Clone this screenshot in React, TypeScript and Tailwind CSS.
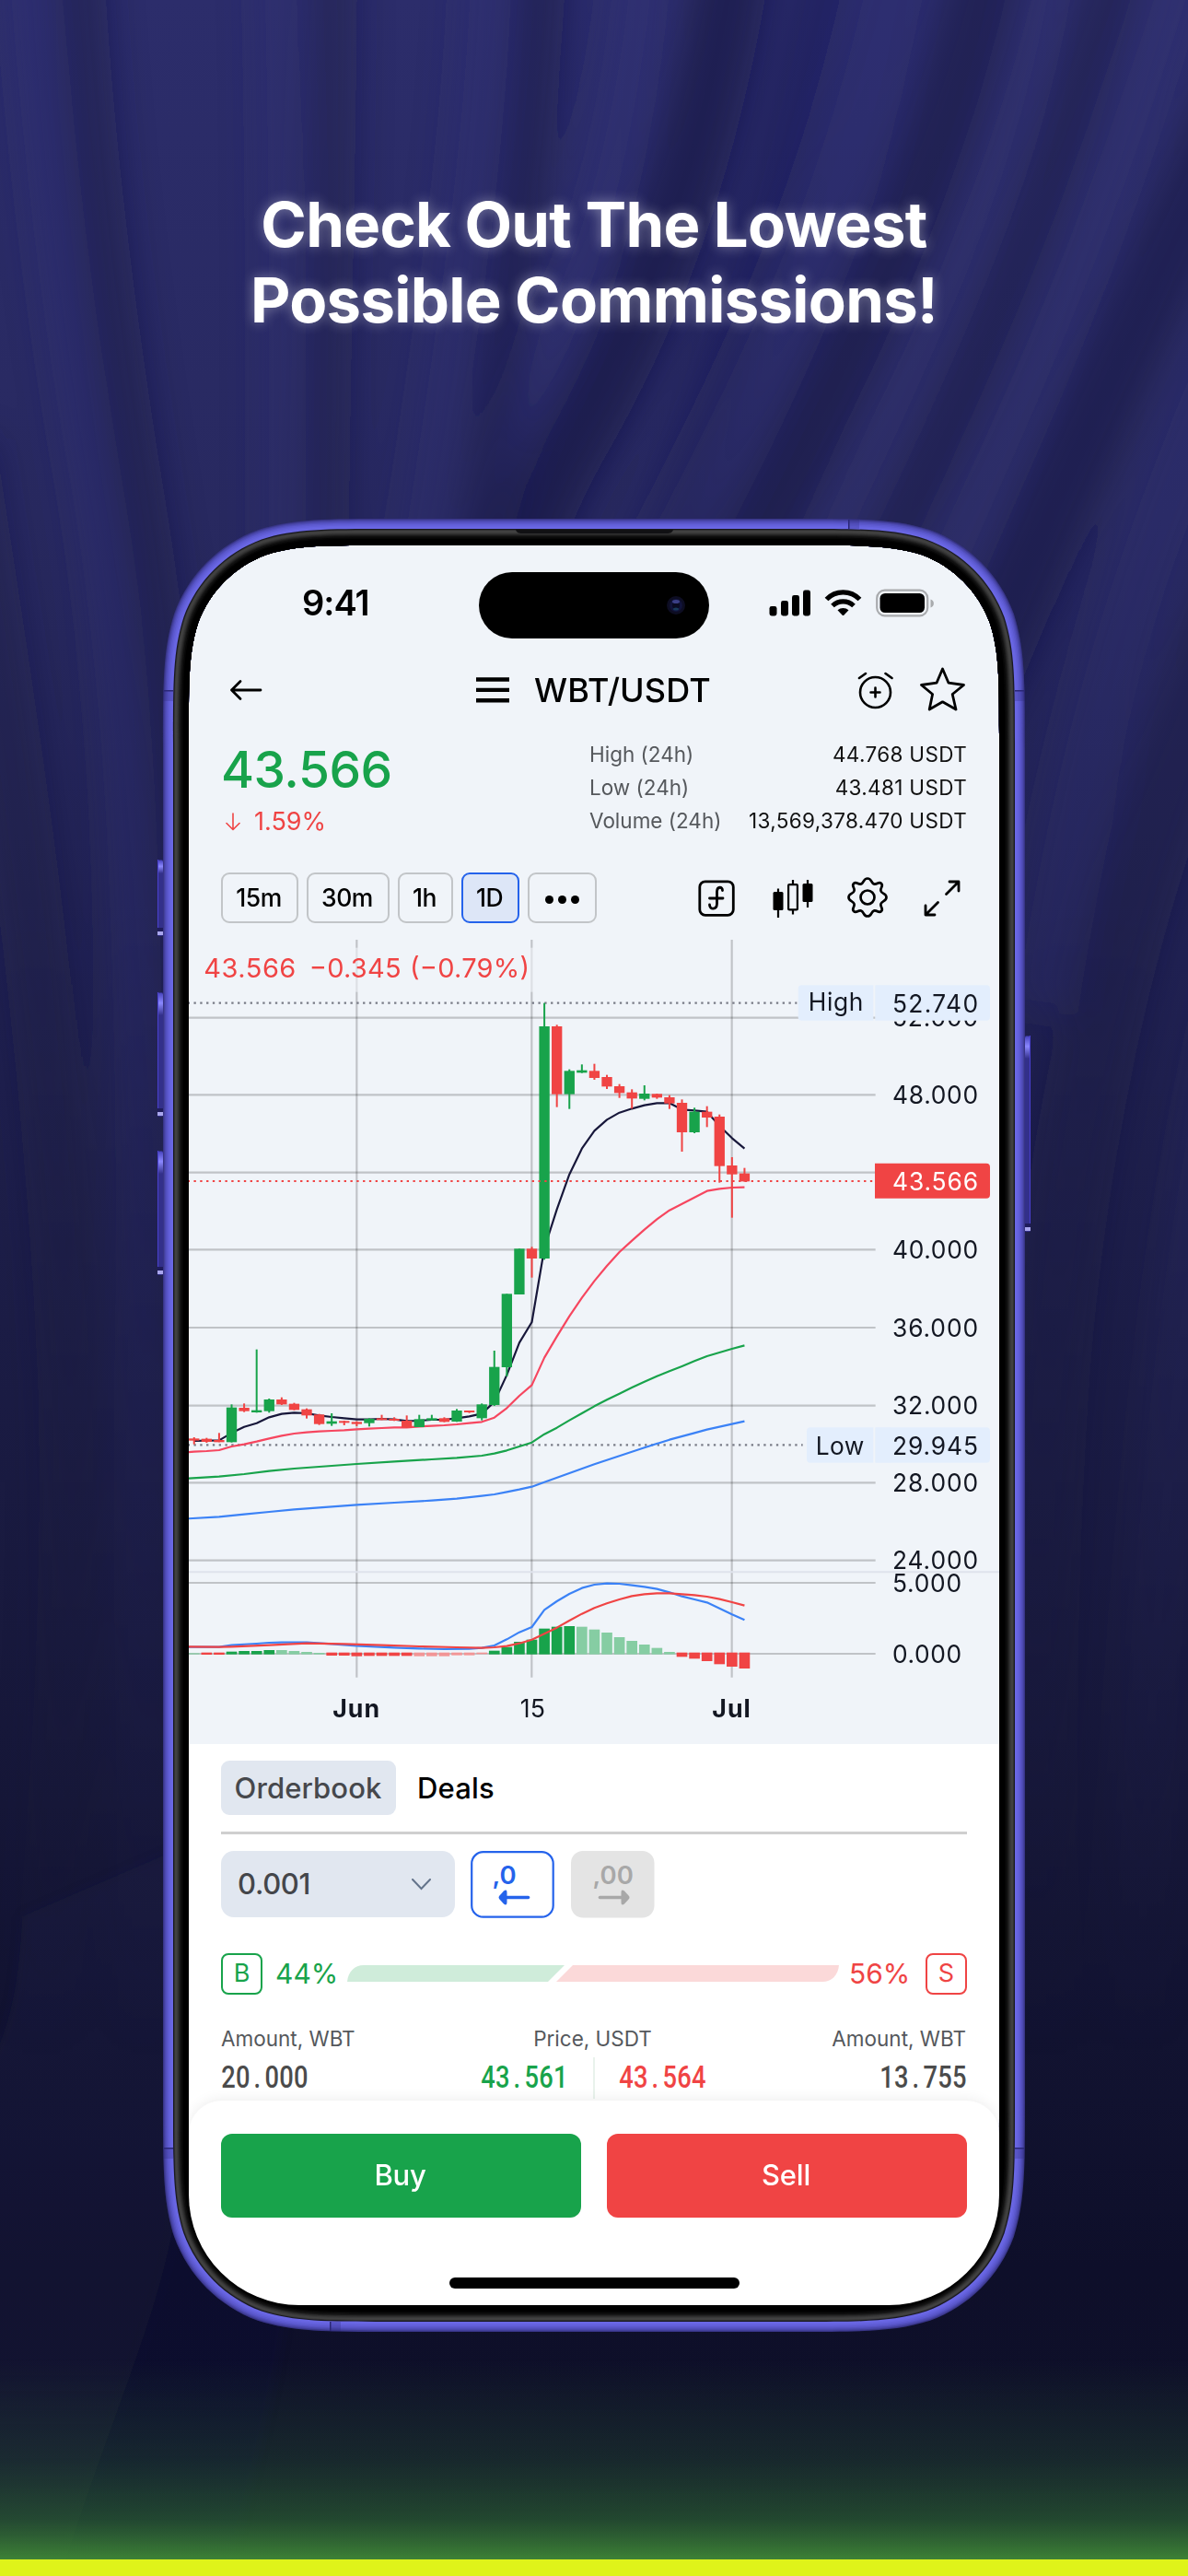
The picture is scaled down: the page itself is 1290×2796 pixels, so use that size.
import type { ReactNode } from "react";

const CORNER = [1.52866, 1.08849, 0.86841, 0.63149, 0.07491, 0.37282, 0.16906];

// Rounded rectangle with continuous (squircle) corners.
function squircle(x: number, y: number, w: number, h: number, r: number) {
  const [a, b, c, d, e, f, g] = CORNER.map((k) => k * r);
  const R = x + w;
  const B = y + h;
  return [
    `M${x + a} ${y}H${R - a}`,
    `C${R - b} ${y} ${R - c} ${y} ${R - d} ${y + e}`,
    `C${R - f} ${y + g} ${R - g} ${y + f} ${R - e} ${y + d}`,
    `C${R} ${y + c} ${R} ${y + b} ${R} ${y + a}`,
    `V${B - a}`,
    `C${R} ${B - b} ${R} ${B - c} ${R - e} ${B - d}`,
    `C${R - g} ${B - f} ${R - f} ${B - g} ${R - d} ${B - e}`,
    `C${R - c} ${B} ${R - b} ${B} ${R - a} ${B}`,
    `H${x + a}`,
    `C${x + b} ${B} ${x + c} ${B} ${x + d} ${B - e}`,
    `C${x + f} ${B - g} ${x + g} ${B - f} ${x + e} ${B - d}`,
    `C${x} ${B - c} ${x} ${B - b} ${x} ${B - a}`,
    `V${y + a}`,
    `C${x} ${y + b} ${x} ${y + c} ${x + e} ${y + d}`,
    `C${x + g} ${y + f} ${x + f} ${y + g} ${x + d} ${y + e}`,
    `C${x + c} ${y} ${x + b} ${y} ${x + a} ${y}Z`,
  ].join("");
}

// Inset from the outer edge of the case and the colour from there inwards.
const rings: [number, string][] = [
  [0, "#383587"],
  [1, "#43409c"],
  [2, "#4c49b0"],
  [3.2, "#5451c0"],
  [4.5, "#5c59ce"],
  [6, "#625fd8"],
  [7.5, "#6764e0"],
  [9, "#6a67e4"],
  [11, "#191920"],
  [12.2, "#3a3a3a"],
  [13, "#414141"],
  [15, "#3a3a3a"],
  [16, "#303030"],
  [17, "#252525"],
  [18, "#191919"],
  [19, "#0f0f0f"],
  [20.5, "#060606"],
  [22, "#000000"],
];

// Dark creases of the cloth, each with a lit ridge beside it.
const folds = [
  { d: "M84 -60C92 120 116 330 154 560C186 760 206 980 210 1500V2600", w: 56, o: 0.4 },
  { d: "M-40 480C10 800 60 1120 76 1500C84 1800 60 2080 10 2600", w: 70, o: 0.32 },
  { d: "M362 -60C362 200 352 420 352 760", w: 52, o: 0.34 },
  { d: "M590 -60C580 160 556 330 490 760", w: 52, o: 0.46 },
  { d: "M800 -60C760 200 690 360 620 480C570 570 550 640 530 760", w: 80, o: 0.55 },
  { d: "M900 -60C840 260 760 500 640 800", w: 60, o: 0.22 },
  { d: "M1080 -60C1020 220 900 440 700 800", w: 84, o: 0.48 },
  { d: "M1220 -60C1140 240 1040 460 860 800", w: 64, o: 0.4 },
  { d: "M1400 -20C1250 330 1150 520 1040 800", w: 84, o: 0.5 },
  { d: "M1400 500C1290 800 1210 960 1160 1300C1130 1500 1120 1700 1120 2600", w: 90, o: 0.36 },
];

const glints = [
  { d: "M30 -60C46 160 66 340 98 520C132 720 146 940 150 1400V2600", w: 44, o: 0.34 },
  { d: "M300 -60C308 200 305 420 306 760", w: 54, o: 0.22 },
  { d: "M530 -60C524 140 500 320 430 760", w: 60, o: 0.24 },
  { d: "M700 -60C680 180 620 340 560 460L470 760", w: 60, o: 0.32 },
  { d: "M980 -60C930 200 840 420 620 800", w: 84, o: 0.26 },
  { d: "M1140 -60C1090 220 980 420 800 800", w: 56, o: 0.28 },
  { d: "M1290 -60C1200 260 1090 460 950 800", w: 64, o: 0.3 },
  { d: "M1400 240C1280 500 1190 700 1130 1100", w: 80, o: 0.24 },
  { d: "M1400 900C1310 1200 1240 1500 1230 2600", w: 80, o: 0.22 },
];

function Backdrop() {
  return (
    <svg className="absolute inset-0" width="1290" height="2796" viewBox="0 0 1290 2796">
      <defs>
        <linearGradient id="night" x1="0" y1="0" x2="0" y2="1">
          <stop offset="0" stopColor="#2c2d6b" />
          <stop offset="0.2" stopColor="#282960" />
          <stop offset="0.42" stopColor="#1f204d" />
          <stop offset="0.7" stopColor="#161738" />
          <stop offset="0.88" stopColor="#0e0f2a" />
          <stop offset="1" stopColor="#0f1028" />
        </linearGradient>
        <linearGradient id="glow" x1="0" y1="0" x2="0" y2="1">
          <stop offset="0" stopColor="#2c5c35" stopOpacity="0" />
          <stop offset="0.5" stopColor="#2c5c35" stopOpacity="0.32" />
          <stop offset="0.8" stopColor="#2f6a34" stopOpacity="0.62" />
          <stop offset="1" stopColor="#408837" stopOpacity="0.95" />
        </linearGradient>
        <linearGradient id="fadeRamp" x1="0" y1="0" x2="0" y2="1">
          <stop offset="0" stopColor="#fff" />
          <stop offset="0.35" stopColor="#fff" />
          <stop offset="0.8" stopColor="#000" />
        </linearGradient>
        <mask id="fade" maskUnits="userSpaceOnUse" x="0" y="0" width="1290" height="2796">
          <rect width="1290" height="2796" fill="url(#fadeRamp)" />
        </mask>
        <filter id="soft" filterUnits="userSpaceOnUse" x="-100" y="-100" width="1490" height="2996">
          <feGaussianBlur stdDeviation="19" />
        </filter>
        <filter id="hazy" filterUnits="userSpaceOnUse" x="-100" y="1900" width="700" height="1000">
          <feGaussianBlur stdDeviation="6" />
        </filter>
      </defs>
      <rect width="1290" height="2796" fill="url(#night)" />
      <g mask="url(#fade)">
        <g fill="none" filter="url(#soft)">
          {glints.map((s) => (
            <path key={s.d} d={s.d} stroke="#36377f" strokeWidth={s.w} opacity={s.o} />
          ))}
          {folds.map((s) => (
            <path key={s.d} d={s.d} stroke="#17173f" strokeWidth={s.w} opacity={s.o} />
          ))}
        </g>
      </g>
      <g fill="#2a2b66" filter="url(#hazy)">
        <path d="M24 2080L210 2000L189 2413C170 2520 123 2618 66 2796H-40V2276C0 2240 20 2180 24 2080Z" opacity="0.13" />
        <path d="M189 2413C170 2520 123 2618 66 2796H247C280 2675 310 2560 325 2400Z" opacity="0.08" />
      </g>
      <rect y="2560" width="1290" height="218" fill="url(#glow)" />
      <rect y="2778" width="1290" height="18" fill="#dff31a" />
    </svg>
  );
}

function SideKey({ x, y, h, flip }: { x: number; y: number; h: number; flip?: boolean }) {
  return (
    <g>
      <rect x={x} y={y} width="6" height={h} rx="1.5" fill="#33308a" />
      <rect x={x} y={y + 1} width="6" height={h > 100 ? 24 : 14} rx="1.5" fill="url(#keyShine)" />
      <rect x={flip ? x + 5 : x} y={y} width="1" height={h - 5} fill="#4a40d0" />
      <rect x={x} y={y + h - 9} width="6" height="4" fill="#1f1c5c" />
      <rect x={x} y={y + h - 5} width="6" height="4" fill="#a9a6ee" />
    </g>
  );
}

function PhoneFrame() {
  const hole = squircle(28, 29, 880, 1910, 134);
  return (
    <svg className="pointer-events-none absolute -left-[28px] -top-[29px] overflow-visible" width="936" height="1968" viewBox="0 0 936 1968">
      <defs>
        <linearGradient id="keyShine" x1="0" y1="0" x2="0" y2="1">
          <stop offset="0" stopColor="#4a46c0" />
          <stop offset="0.45" stopColor="#8b88ff" />
          <stop offset="1" stopColor="#33308a" />
        </linearGradient>
      </defs>
      <SideKey x={-6} y={370} h={83} />
      <SideKey x={-6} y={514} h={135} />
      <SideKey x={-6} y={686} h={135} />
      <SideKey x={936} y={561} h={213} flip />
      {rings.map(([inset, color]) => (
        <path
          key={inset}
          fillRule="evenodd"
          fill={color}
          d={squircle(inset, inset, 936 - inset * 2, 1968 - inset * 2, 163 - inset) + hole}
        />
      ))}
      <path d="M383 12H554C553 15 551 16 547 16H390C386 16 384 15 383 12Z" fill="#111114" />
      <g fill="#2a2776">
        <rect x="1" y="186" width="10" height="1.5" />
        <rect x="925" y="186" width="10" height="1.5" />
        <rect x="1" y="1768" width="10" height="1.5" />
        <rect x="925" y="1768" width="10" height="1.5" />
        <rect x="744" y="1" width="1.5" height="10" />
        <rect x="181" y="1957" width="1.5" height="10" />
      </g>
      <g fill="#2a2776" opacity="0.25">
        <rect x="0" y="187" width="11" height="11" />
        <rect x="925" y="187" width="11" height="11" />
        <rect x="0" y="1769" width="11" height="11" />
        <rect x="925" y="1769" width="11" height="11" />
        <rect x="745" y="0" width="11" height="11" />
        <rect x="182" y="1957" width="11" height="11" />
      </g>
    </svg>
  );
}

function StatusBar() {
  return (
    <div className="mt-[29px] flex h-[72px] items-center">
      <div className="w-[315px] pb-[6px] pl-[123px] text-[38px] leading-none font-semibold tracking-[-1px]">9:41</div>
      <div className="flex h-[72px] w-[250px] items-center justify-end rounded-full bg-black pr-[25px]">
        <svg width="22" height="22" viewBox="0 0 22 22">
          <circle cx="11" cy="11" r="10" fill="#0d0d22" />
          <circle cx="11" cy="11" r="7" fill="#11133a" />
          <circle cx="11" cy="11" r="4" fill="#0a0b22" />
          <ellipse cx="11" cy="7" rx="4" ry="2" fill="#3b3f86" />
          <ellipse cx="11" cy="15" rx="3" ry="1.6" fill="#173a5a" />
        </svg>
      </div>
      <svg className="mb-[6px] ml-[65px]" width="182" height="32" viewBox="0 0 182 32">
        <rect x="0.5" y="20" width="8" height="10.500" rx="2.4" />
        <rect x="13" y="14" width="8" height="16.500" rx="2.4" />
        <rect x="25" y="8" width="8" height="22.500" rx="2.4" />
        <rect x="37" y="2.500" width="8" height="28" rx="2.4" />
        <g fill="none" stroke="#000" strokeWidth="5.200">
          <path d="M62.500 12.500A25 25 0 0 1 98.500 12.500" />
          <path d="M69 19.500A16.500 16.500 0 0 1 92 19.500" />
        </g>
        <path d="M74.500 24.200A9.500 9.500 0 0 1 86.500 24.200L81.300 29.700Q80.500 30.500 79.700 29.700Z" />
        <rect x="117.200" y="2.700" width="55" height="27.600" rx="8.500" fill="none" stroke="#a9abae" strokeWidth="2.200" />
        <rect x="120.500" y="6" width="48.500" height="21" rx="5.500" />
        <path d="M175.500 12.500C180 14 180 20 175.500 21.500Z" fill="#a9abae" />
      </svg>
    </div>
  );
}

function NavBar() {
  return (
    <div className="mt-[28px] flex h-[55px] items-center pl-[44px]">
      <svg width="38" height="26" viewBox="0 0 38 26" fill="none" stroke="#000" strokeWidth="2.800" strokeLinecap="round" strokeLinejoin="round">
        <path d="M34 13H2.500M12 3.500L2.500 13L12 22.500" />
      </svg>
      <svg className="ml-[230px]" width="36" height="28" viewBox="0 0 36 28">
        <path d="M0 0.300H36V4.700H0ZM0 11.700H36V16.100H0ZM0 23.100H36V27.500H0Z" />
      </svg>
      <h2 className="ml-[27px] w-[350px] text-[36px] leading-none font-medium tracking-[0.1px]">WBT/USDT</h2>
      <svg className="ml-px" width="40" height="42" viewBox="0 0 40 42" fill="none" stroke="#000" strokeWidth="2.600" strokeLinecap="round">
        <circle cx="19.500" cy="23.500" r="16.500" />
        <path d="M14.500 23.500H24.500M19.500 18.500V28.500M2 8L9 3M30.500 3L37.500 8" />
      </svg>
      <svg className="mb-[2px] ml-[28px]" width="50" height="50" viewBox="0 0 50 50" fill="none" stroke="#000" strokeWidth="2.800" strokeLinejoin="round">
        <path d="M24.500 3L31 18.200L47.500 20.500L35.200 30.500L39 47L24.500 38.800L10.200 47L13.600 30.500L1.500 20.500L18 18.200Z" />
      </svg>
    </div>
  );
}

const stats = [
  ["High (24h)", "44.768 USDT"],
  ["Low (24h)", "43.481 USDT"],
  ["Volume (24h)", "13,569,378.470 USDT"],
];

function Ticker() {
  return (
    <div className="flex h-[171px] justify-between pt-[25px] pr-[36px] pl-[35px]">
      <div>
        <div className="mt-[3px] h-[62px] text-[55px] leading-[62px] font-medium tracking-[-0.5px] text-[#18a34b]">43.566</div>
        <div className="mt-[6px] flex h-[40px] items-center text-[27px] text-[#ef4444]">
          <svg className="mr-[15px] ml-[5px]" width="16" height="20" viewBox="0 0 16 20" fill="none" stroke="#ef4444" strokeWidth="1.600" strokeLinecap="round" strokeLinejoin="round">
            <path d="M8 1V18M1 11.500L8 18.500L15 11.500" />
          </svg>
          1.59%
        </div>
      </div>
      <div className="w-[409px]">
        {stats.map(([label, value]) => (
          <div className="flex h-[36px] items-center justify-between text-[22.500px]" key={label}>
            <span className="text-[#55585c]">{label}</span>
            <span className="-mr-[1px] tracking-[0.34px] text-[#111]">{value}</span>
          </div>
        ))}
      </div>
    </div>
  );
}

function Toolbar() {
  const tab = "flex h-[55px] items-center justify-center rounded-[9px] border-2 border-[#c2c5c8] text-[26.500px] font-medium tracking-[-0.5px]";
  return (
    <div className="mb-[8px] flex h-[55px] items-center pl-[35px]">
      <div className="flex gap-[9px]">
        <div className={`${tab} w-[84px] pr-[2px]`}>15m</div>
        <div className={`${tab} w-[90px] pr-[2px]`}>30m</div>
        <div className={`${tab} w-[60px] pr-[2px]`}>1h</div>
        <div className="flex h-[55px] w-[63px] items-center justify-center rounded-[9px] border-2 border-[#2563eb] bg-[#dde6f7] pr-[2px] text-[26.500px] font-medium tracking-[-0.5px]">1D</div>
        <div className={`${tab} w-[75px] gap-[5px]`}>
          <i className="mt-[3px] size-[9px] rounded-full bg-black" />
          <i className="mt-[3px] size-[9px] rounded-full bg-black" />
          <i className="mt-[3px] size-[9px] rounded-full bg-black" />
        </div>
      </div>
      <svg className="ml-[110px]" width="40" height="40" viewBox="0 0 40 40" fill="none" stroke="#000" strokeWidth="2.800" strokeLinecap="round">
        <rect x="1.800" y="1.800" width="36.500" height="36.500" rx="6" />
        <path d="M26.500 11.500C26.500 7 20.800 7 20.500 12.500V26C20.300 32.500 12.500 33 12.500 27M12.500 20H27" />
      </svg>
      <svg className="ml-[41px]" width="44" height="44" viewBox="0 0 44 44">
        <path d="M6 11.500V43M22 2V39.500M38 2V32" stroke="#000" strokeWidth="2.200" />
        <rect x="0.500" y="15" width="11" height="20" rx="1.500" />
        <rect x="17.100" y="7.100" width="9.800" height="27.300" rx="1" fill="#f0f4f9" stroke="#000" strokeWidth="2.200" />
        <rect x="32.500" y="6" width="11" height="20" rx="1.500" />
      </svg>
      <svg className="mb-px ml-[37px]" width="44" height="44" viewBox="0 0 44 44" fill="none" stroke="#000" strokeWidth="2.700" strokeLinejoin="round">
        <circle cx="22" cy="22" r="7.500" />
        <path d="M22 1.500C27 1.500 25.500 6.800 29.300 7.600C32.500 8.300 34.300 4.300 37 7C39.700 9.700 35.700 11.500 36.400 14.700C37.200 18.500 42.500 17.500 42.500 22C42.500 26.500 37.200 25.500 36.400 29.300C35.700 32.500 39.700 34.300 37 37C34.300 39.700 32.500 35.700 29.300 36.400C25.500 37.200 27 42.500 22 42.500C17 42.500 18.500 37.200 14.700 36.400C11.500 35.700 9.700 39.700 7 37C4.300 34.300 8.300 32.500 7.600 29.300C6.800 25.500 1.500 26.500 1.500 22C1.500 17.500 6.800 18.500 7.600 14.700C8.300 11.500 4.300 9.700 7 7C9.700 4.300 11.500 8.300 14.700 7.600C18.500 6.800 17 1.500 22 1.500Z" />
      </svg>
      <svg className="ml-[39px]" width="40" height="40" viewBox="0 0 40 40" fill="none" stroke="#000" strokeWidth="2.800" strokeLinecap="round" strokeLinejoin="round">
        <path d="M24.500 15.500L38 2M28 2H38V12M15.500 24.500L2 38M2 28V38H12" />
      </svg>
    </div>
  );
}

// Chart units are thirds of a pixel: 2640 × 2649 for an 880 × 883 box.
const STEP = 40.75;
const cx = (i: number) => 17.3 + STEP * i;

// [high, low, bodyTop, bodyBottom, rising]
const candles: [number, number, number, number, 0 | 1][] = [
  [1650, 1673, 1654, 1661, 0],
  [1652, 1668, 1655, 1665, 0],
  [1636, 1666, 1659, 1666, 0],
  [1543, 1667, 1553, 1666, 1],
  [1540, 1568, 1554, 1565, 0],
  [1364, 1570, 1562, 1569, 1],
  [1524, 1570, 1527, 1565, 1],
  [1520, 1545, 1527, 1543, 0],
  [1538, 1562, 1541, 1561, 0],
  [1556, 1589, 1559, 1579, 0],
  [1574, 1610, 1576, 1607, 0],
  [1572, 1613, 1598, 1606, 1],
  [1596, 1611, 1597, 1603, 0],
  [1598, 1614, 1600, 1607, 0],
  [1588, 1615, 1590, 1604, 1],
  [1577, 1594, 1588, 1594, 0],
  [1585, 1597, 1590, 1596, 0],
  [1579, 1620, 1596, 1619, 0],
  [1577, 1617, 1591, 1617, 1],
  [1577, 1595, 1588, 1595, 1],
  [1585, 1601, 1588, 1600, 0],
  [1558, 1600, 1563, 1599, 1],
  [1563, 1571, 1563, 1569, 0],
  [1540, 1595, 1543, 1588, 1],
  [1368, 1548, 1421, 1545, 1],
  [1183, 1452, 1183, 1422, 1],
  [1036, 1185, 1036, 1185, 1],
  [1030, 1130, 1036, 1068, 0],
  [236, 1072, 312, 1068, 1],
  [307, 575, 312, 533, 0],
  [452, 581, 457, 533, 1],
  [436, 464, 455, 463, 1],
  [434, 486, 457, 480, 0],
  [470, 516, 477, 508, 0],
  [500, 545, 507, 529, 0],
  [517, 580, 527, 547, 0],
  [504, 553, 531, 548, 1],
  [531, 548, 532, 544, 0],
  [536, 581, 543, 563, 0],
  [550, 720, 561, 657, 0],
  [577, 660, 590, 657, 1],
  [572, 640, 590, 609, 0],
  [599, 821, 606, 767, 0],
  [738, 935, 765, 794, 0],
  [773, 818, 791, 817, 0],
];

type Series = [number, number][];

const maFast: Series = [
  1662, 1661, 1660, 1636, 1616, 1604, 1585, 1574, 1570, 1572, 1579, 1584, 1588, 1592, 1592, 1590, 1592, 1597, 1596, 1593, 1593, 1588,
  1582, 1573, 1535, 1447, 1342, 1275, 1035, 908, 794, 710, 652, 616, 593, 580, 569, 562, 562, 583, 586, 590, 636, 676, 710,
].map((y, i) => [i, y]);

const maMid: Series = [
  1697, 1695, 1692, 1680, 1673, 1664, 1654, 1645, 1638, 1634, 1631, 1629, 1627, 1624, 1622, 1620, 1618, 1618, 1615, 1613, 1611, 1608,
  1604, 1600, 1586, 1555, 1515, 1480, 1391, 1322, 1256, 1196, 1141, 1092, 1047, 1010, 974, 940, 911, 890, 869, 848, 841, 837, 836,
].map((y, i) => [i, y]);

const maSlow: Series = [
  [-1, 1785], [2, 1778], [4, 1770], [6, 1760], [8, 1752], [10, 1746], [13, 1737], [16, 1729], [19, 1722], [21, 1717], [23, 1710],
  [24, 1703], [25, 1693], [26, 1680], [27, 1667], [28, 1640], [29, 1619], [30, 1595], [31, 1572], [32, 1549], [33, 1528], [34, 1508],
  [35, 1488], [36, 1469], [37, 1451], [38, 1435], [39, 1419], [40, 1402], [41, 1386], [42, 1374], [43, 1362], [44, 1351],
];

const maLong: Series = [
  [-1, 1916], [2, 1909], [4, 1901], [6, 1893], [8, 1885], [10, 1879], [13, 1870], [16, 1863], [19, 1856], [21, 1850], [23, 1841],
  [24, 1836], [25, 1828], [26, 1820], [27, 1811], [28, 1796], [30, 1767], [32, 1738], [34, 1711], [36, 1684], [38, 1658], [40, 1636],
  [41, 1625], [43, 1607], [44, 1598],
];

const macd: Series = [
  [-1, 2333], [2, 2333], [3, 2327], [5, 2322], [6, 2319], [7, 2318], [9, 2318], [11, 2323], [13, 2329], [16, 2335], [18, 2338],
  [20, 2340], [22, 2339], [23, 2336], [24, 2328], [25, 2308], [26, 2285], [27, 2268], [28, 2212], [29, 2184], [30, 2160], [31, 2141],
  [32, 2130], [33, 2126], [34, 2127], [35, 2132], [36, 2137], [37, 2144], [38, 2155], [39, 2168], [40, 2178], [41, 2188], [42, 2207],
  [43, 2227], [44, 2245],
];

const signal: Series = [
  [-1, 2332], [2, 2333], [3, 2332], [6, 2327], [9, 2321], [12, 2323], [15, 2327], [18, 2331], [21, 2334], [23, 2336], [24, 2334],
  [25, 2330], [26, 2321], [27, 2309], [28, 2290], [29, 2270], [30, 2247], [31, 2225], [32, 2206], [33, 2191], [34, 2178], [35, 2167],
  [36, 2161], [37, 2158], [38, 2158], [39, 2161], [40, 2164], [41, 2169], [42, 2177], [43, 2187], [44, 2198],
];

const GREEN = "#18a34b";
const RED = "#f04444";
const PALE_GREEN = "#86cda3";
const PALE_RED = "#f29596";

// Signed bar length from the zero line, and colour.
const histogram: [number, string][] = [
  [4, PALE_GREEN], [-7, RED], [-7, RED], [9, GREEN], [11, GREEN], [11, GREEN], [14, GREEN], [14, PALE_GREEN], [11, PALE_GREEN],
  [8, PALE_GREEN], [5, PALE_GREEN], [-10, RED], [-10, RED], [-12, RED], [-11, RED], [-11, RED], [-11, RED], [-11, RED],
  [-12, PALE_RED], [-12, PALE_RED], [-12, PALE_RED], [-9, PALE_RED], [-9, PALE_RED], [-5, PALE_RED], [12, GREEN], [24, GREEN],
  [41, GREEN], [48, GREEN], [84, GREEN], [90, GREEN], [92, GREEN], [90, PALE_GREEN], [81, PALE_GREEN], [71, PALE_GREEN],
  [56, PALE_GREEN], [44, PALE_GREEN], [32, PALE_GREEN], [21, PALE_GREEN], [8, PALE_GREEN], [-14, RED], [-20, RED], [-28, RED],
  [-38, RED], [-46, RED], [-52, RED],
];

const axis: [string, number][] = [
  ["52.000", 284],
  ["48.000", 535],
  ["40.000", 1039],
  ["36.000", 1293],
  ["32.000", 1547],
  ["28.000", 1798],
  ["24.000", 2051],
];

function Line({ points, color }: { points: Series; color: string }) {
  return (
    <polyline
      fill="none"
      stroke={color}
      strokeWidth="6.500"
      strokeLinejoin="round"
      points={points.map(([i, y]) => `${cx(i)},${y}`).join(" ")}
    />
  );
}

function AxisText({ x = 2292, y, w, children, fill = "#131722" }: { x?: number; y: number; w: number; children: ReactNode; fill?: string }) {
  return (
    <text x={x} y={y + 29} textLength={w} fontSize="79" fill={fill}>
      {children}
    </text>
  );
}

function Chart() {
  return (
    <svg className="block h-[883px] w-[880px] shrink-0" viewBox="0 0 2640 2649">
      <g stroke="#000" strokeOpacity="0.2" strokeWidth="6.500">
        {[284, 535, 788, 1039, 1293, 1547, 1798, 2051, 2124, 2355].map((y) => (
          <path key={y} d={`M0 ${y}H2237`} />
        ))}
        {[547, 1117, 1769].map((x) => (
          <path key={x} d={`M${x} 30V2432`} />
        ))}
      </g>
      <rect x="30" y="56" width="1095" height="144" fill="#f0f4f9" opacity="0.6" />
      <path d="M0 2089H2640" stroke="#dfe3ec" strokeWidth="6" />

      <g strokeWidth="6.500" strokeDasharray="7 13.400" strokeDashoffset="4">
        <path d="M0 236H1981M0 1675H2000" stroke="#787b86" />
      </g>

      <Line points={maFast} color="#17173a" />
      <Line points={[[-1, 1700], ...maMid]} color="#f6465f" />
      <Line points={maSlow} color={GREEN} />
      <Line points={maLong} color="#3b82f6" />

      {candles.map(([high, low, top, bottom, up], i) => (
        <g key={i} fill={up ? GREEN : RED}>
          <rect x={cx(i) - 3} y={high} width="6" height={low - high} />
          <rect x={cx(i) - 17} y={top} width="34" height={bottom - top} />
        </g>
      ))}
      <path d="M0 816H2232" stroke={RED} strokeWidth="6.500" strokeDasharray="7 13.400" strokeDashoffset="4" />

      {histogram.map(([v, color], i) => (
        <rect key={i} x={cx(i) - 17.500} y={v > 0 ? 2357 - v : 2351} width="35" height={Math.abs(v)} fill={color} />
      ))}
      <Line points={macd} color="#3b82f6" />
      <Line points={signal} color={RED} />

      <text y="152" fontSize="87" fill={RED}>
        <tspan x="49" textLength="300">43.566</tspan>
        <tspan x="392" textLength="300">−0.345</tspan>
        <tspan x="720" textLength="390">(−0.79%)</tspan>
      </text>

      {axis.map(([label, y]) => (
        <AxisText key={label} y={y} w={279}>{label}</AxisText>
      ))}
      <AxisText y={2124} w={225}>5.000</AxisText>
      <AxisText y={2355} w={225}>0.000</AxisText>

      <g fill="#e3eefd">
        <path d="M1997 178H2230V293H1997Q1985 293 1985 281V190Q1985 178 1997 178Z" />
        <path d="M2236 178H2598Q2610 178 2610 190V281Q2610 293 2598 293H2236Z" />
        <path d="M2025 1618H2230V1733H2025Q2013 1733 2013 1721V1630Q2013 1618 2025 1618Z" />
        <path d="M2236 1618H2598Q2610 1618 2610 1630V1721Q2610 1733 2598 1733H2236Z" />
      </g>
      <path d="M2235 758H2598Q2610 758 2610 770V860Q2610 872 2598 872H2235Z" fill={RED} />
      <AxisText x={2018} y={232} w={179}>High</AxisText>
      <AxisText y={239} w={279}>52.740</AxisText>
      <AxisText x={2042} y={1678} w={158}>Low</AxisText>
      <AxisText y={1678} w={279}>29.945</AxisText>
      <AxisText y={818} w={279} fill="#fff">43.566</AxisText>

      <g fontSize="80" fill="#131722" textAnchor="middle">
        <text x="545" y="2562" fontWeight="700" textLength="152">Jun</text>
        <text x="1120" y="2562">15</text>
        <text x="1767" y="2562" fontWeight="700" textLength="124">Jul</text>
      </g>
    </svg>
  );
}

// Tabular figure run in narrow cells.
function Figures({ value, color }: { value: string; color: string }) {
  return (
    <svg className="overflow-visible" width="95" height="44" viewBox="0 0 95 44">
      <text
        y="32.300"
        transform="scale(.84 1)"
        x={value.split("").map((_, i) => (i * 15.75 + 7.9) / 0.84).join(" ")}
        textAnchor="middle"
        fontFamily="Roboto, sans-serif"
        fontSize="32.500"
        fontWeight="500"
        fill={color}
      >
        {value}
      </text>
    </svg>
  );
}

function Precision() {
  return (
    <div className="mt-[18px] flex h-[72px] items-center px-[35px]">
      <div className="flex h-[72px] w-[254px] items-center justify-between rounded-[14px] bg-[#e1e7f0] pr-[26px] pl-[18px] text-[31px] text-[#44464a]">
        <span className="font-medium tracking-[-0.3px]">0.001</span>
        <svg width="21" height="13" viewBox="0 0 21 13" fill="none" stroke="#64748b" strokeWidth="2" strokeLinecap="round">
          <path d="M1 1L10.500 11L20 1" />
        </svg>
      </div>
      <svg className="ml-[17px]" width="91" height="73" viewBox="0 0 91 73">
        <rect x="1.200" y="1.200" width="88.500" height="70.500" rx="12.500" fill="#fff" stroke="#2563eb" strokeWidth="2.200" />
        <text x="23.500" y="36" fontSize="27.500" fontWeight="600" fill="#2563eb">,0</text>
        <path d="M62.500 50.500H37" stroke="#2563eb" strokeWidth="3.600" strokeLinecap="round" />
        <path d="M31 49L36 43.500Q39.500 41 39.500 45V56Q39.500 60 36 57.500L31 52Q30 50.500 31 49Z" fill="#2563eb" />
      </svg>
      <svg className="ml-[18px]" width="91" height="73" viewBox="0 0 91 73">
        <rect width="90.500" height="72.500" rx="13" fill="#e4e4e4" />
        <text x="23.500" y="36" fontSize="27.500" fontWeight="600" fill="#a8a8a8">,00</text>
        <path d="M31.500 50.500H56" stroke="#a8a8a8" strokeWidth="3.600" strokeLinecap="round" />
        <path d="M63 49L58 43.500Q54.500 41 54.500 45V56Q54.500 60 58 57.500L63 52Q64 50.500 63 49Z" fill="#a8a8a8" />
      </svg>
    </div>
  );
}

function Balance() {
  return (
    <div className="mt-[38px] flex h-[46px] items-center px-[35px] text-[30px]">
      <span className="flex size-[45px] items-center justify-center rounded-[8px] border-2 border-[#18a34b] text-[27px] text-[#18a34b]">B</span>
      <span className="w-[92px] pl-[14px] text-[#18a34b]">44%</span>
      <svg width="534" height="18" viewBox="0 0 534 18">
        <path d="M18 0H236L218 18H0C1 7 8 0 18 0Z" fill="#cfecda" />
        <path d="M245 0H534C533 11 526 18 516 18H227Z" fill="#fbd9d9" />
      </svg>
      <span className="w-[94px] pl-[11px] text-[#ef4444]">56%</span>
      <span className="flex size-[45px] items-center justify-center rounded-[8px] border-2 border-[#ef4444] text-[27px] text-[#ef4444]">S</span>
    </div>
  );
}

function Orderbook() {
  return (
    <div className="h-[450px] shrink-0 bg-white pt-[18px]">
      <div className="mx-[35px] flex h-[80px] border-b-[3px] border-[#cfcfcf] text-[31px] font-medium">
        <div className="flex h-[59px] w-[190px] items-center justify-center rounded-[9px] bg-[#e1e7f0] pt-[2px] pr-px tracking-[0.1px] text-[#46484c]">Orderbook</div>
        <div className="ml-[23px] flex h-[59px] items-center pt-[2px] tracking-[0.2px] text-black">Deals</div>
      </div>
      <Precision />
      <Balance />
      <div className="mt-[30px] flex h-[36px] items-center justify-between px-[35px] text-[22.500px] text-[#55585c]">
        <span>Amount, WBT</span>
        <span className="pr-[2px]">Price, USDT</span>
        <span className="pr-px">Amount, WBT</span>
      </div>
      <div className="mt-[2px] flex h-[45px] items-center pr-[35px] pl-[35px]">
        <Figures value="20.000" color="#4b4b4b" />
        <div className="ml-[187px]"><Figures value="43.561" color={GREEN} /></div>
        <div className="ml-[27px] h-[45px] w-[2px] bg-[#e9f2ec]" />
        <div className="ml-[26px]"><Figures value="43.564" color={RED} /></div>
        <div className="ml-auto"><Figures value="13.755" color="#4b4b4b" /></div>
      </div>
    </div>
  );
}

function ActionSheet() {
  return (
    <div className="z-10 -mt-[63px] flex grow flex-col rounded-t-[36px] bg-white px-[35px] pt-[36px] shadow-[0_-2px_14px_rgba(0,0,0,0.07)]">
      <div className="flex gap-[28px] text-[31px] font-medium tracking-[-0.2px] text-white">
        <button className="h-[91px] w-[391px] rounded-[12px] bg-[#18a34b] pr-[2px]">Buy</button>
        <button className="h-[91px] w-[391px] rounded-[12px] bg-[#f04444] pr-[2px]">Sell</button>
      </div>
      <div className="mx-auto mt-[65px] h-[12px] w-[315px] rounded-full bg-black" />
    </div>
  );
}

export default function App() {
  return (
    <div className="relative flex h-[2796px] w-[1290px] flex-col items-center overflow-hidden bg-[#0f1029] font-[Inter,sans-serif]">
      <Backdrop />
      <h1 className="relative mt-[203px] h-[389px] text-center text-[67px] leading-[82px] font-bold tracking-[-0.700px] text-white [text-shadow:0_0_14px_rgba(255,255,255,0.4)]">
        Check Out The Lowest
        <br />
        Possible Commissions!
      </h1>
      <div className="relative h-[1910px] w-[880px]">
        <div className="flex h-[1910px] flex-col overflow-hidden rounded-[120px] bg-[#f0f4f9] text-black">
          <StatusBar />
          <NavBar />
          <Ticker />
          <Toolbar />
          <Chart />
          <Orderbook />
          <ActionSheet />
        </div>
        <PhoneFrame />
      </div>
    </div>
  );
}
